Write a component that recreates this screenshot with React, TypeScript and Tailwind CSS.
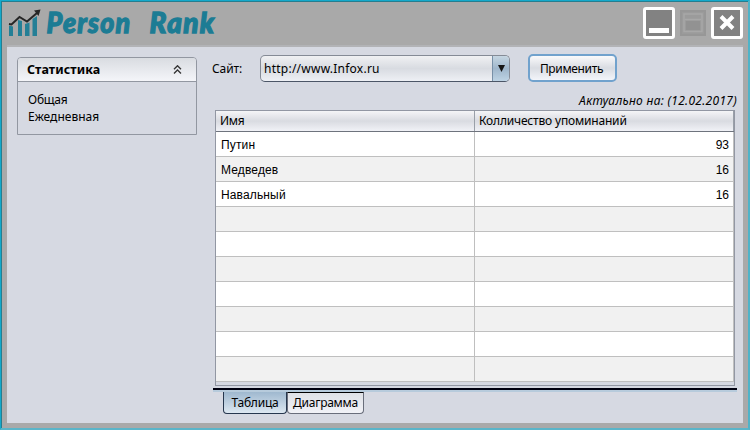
import React from "react";

const rows: [string, string][] = [
  ["Путин", "93"],
  ["Медведев", "16"],
  ["Навальный", "16"],
  ["", ""],
  ["", ""],
  ["", ""],
  ["", ""],
  ["", ""],
  ["", ""],
  ["", ""],
];

function Logo() {
  return (
    <svg width="222" height="45" viewBox="0 0 222 45" className="block">
      <path d="M9 25.500l4 1V36H9zM18 20l4 1v15h-4zM25 24l4.500-1.500V36H25zM32.500 19l4.500-3v20h-4.500z" fill="#247f96" />
      <path d="M9 24l2.500.5 8-7.500 7.500 4.500 10-8.500" fill="none" stroke="#262626" strokeWidth="2" />
      <path d="M34 10.500l6.500-1-2 6.500z" fill="#262626" />
      <g
        fill="#1c7c94"
        stroke="#1c7c94"
        strokeWidth="1.300"
        fontFamily="Lato, sans-serif"
        fontWeight="900"
        fontStyle="italic"
        fontSize="28.500"
      >
        <text transform="translate(46.500 32.500) scale(.94 1)" textLength="89" lengthAdjust="spacing">Person</text>
        <text transform="translate(149.500 32.500) scale(.98 1)" textLength="66" lengthAdjust="spacing">Rank</text>
      </g>
    </svg>
  );
}

function WindowButtons() {
  return (
    <svg width="104" height="45" viewBox="640 0 104 45" className="block">
      <rect x="644.500" y="8.500" width="29" height="29" rx="1.500" fill="#828282" stroke="#fff" strokeWidth="3" />
      <rect x="649" y="28" width="20" height="5" fill="#fff" />
      <rect x="681" y="11" width="24" height="24" fill="#9b9b9b" stroke="#979797" strokeWidth="2" />
      <path d="M684 14h18v17.500h-18zM685 19.500h16" fill="none" stroke="#a8a8a8" strokeWidth="1.500" />
      <rect x="686" y="21" width="14" height="9" fill="#929292" />
      <rect x="712.500" y="8.500" width="29" height="29" rx="1.500" fill="#828282" stroke="#fff" strokeWidth="3" />
      <path d="M721 16.500l12 12M733 16.500l-12 12" stroke="#fff" strokeWidth="4" />
    </svg>
  );
}

function Sidebar() {
  return (
    <aside className="ml-[10px] mt-[10px] h-[78px] w-[180px] shrink-0 rounded-t-[4px] border border-[#9297a1]">
      <div className="flex h-[24px] items-center justify-between rounded-t-[3px] border-b border-[#9297a1] bg-linear-to-b from-[#d9dce1] to-[#f4f5f9] pl-[9px] pr-[14px]">
        <b className="pt-px text-[12.500px] leading-none tracking-[0.050px]">Статистика</b>
        <svg width="9" height="10" viewBox="0 0 9 10" fill="none" stroke="#333" strokeWidth="1.300">
          <path d="M1 4.200l3.500-3.500L8 4.200M1 8.500l3.500-3.500L8 8.500" />
        </svg>
      </div>
      <ul className="pl-[10px] pt-[9px] leading-[17px]">
        <li className="tracking-[-0.250px]">Общая</li>
        <li className="tracking-[0.020px]">Ежедневная</li>
      </ul>
    </aside>
  );
}

function Toolbar() {
  return (
    <div className="flex h-[28px] items-center">
      <span className="w-[48px] pt-px tracking-[-0.100px]">Сайт:</span>
      <div className="flex h-[27px] w-[250px] overflow-hidden rounded-[5px] border border-[#858b96] border-b-[#4c5667] bg-linear-to-b from-[#f0f1f3] via-[#d8dbe1] to-[#eef0f5]">
        <span className="flex flex-1 items-center pl-[3px] pt-px tracking-[0.240px]">http://www.Infox.ru</span>
        <span className="flex w-[17px] items-center justify-center border-l border-[#7890a7] bg-linear-to-b from-[#c6d6e2] via-[#9fb6cb] to-[#bed3e4]">
          <svg width="7" height="7" viewBox="0 0 7 7">
            <path d="M0 0h7L3.500 7z" fill="#151515" />
          </svg>
        </span>
      </div>
      <button className="ml-[18px] h-[28px] w-[89px] rounded-[5px] border-2 border-[#71a2cd] bg-linear-to-b from-[#fafafb] via-[#d9dce2] to-[#f3f5fa] pr-[2px] pt-px tracking-[-0.350px]">
        Применить
      </button>
    </div>
  );
}

function Table() {
  return (
    <div className="ml-[3px] h-[276px] w-[520px] border border-[#9297a3] bg-[#d6d9e2]">
      <div className="flex h-[21px] border-b border-[#6e737d] bg-linear-to-b from-[#f5f5f7] via-[#d9dbe1] to-[#f1f2f7] leading-[20px]">
        <div className="w-[259px] border-r border-[#999fa8] pl-[4px] tracking-[-0.300px]">Имя</div>
        <div className="flex-1 border-r border-[#999fa8] pl-[4px] tracking-[-0.180px]">Колличество упоминаний</div>
      </div>
      {rows.map(([name, count], i) => (
        <div
          key={i}
          className="flex h-[25px] border-b border-[#bfbfbf] font-['Liberation_Sans',Arial,sans-serif] text-[12px] leading-[26px] even:bg-white odd:bg-[#f1f1f1]"
        >
          <div className="w-[259px] border-r border-[#bfbfbf] pl-[5px] tracking-[0.140px]">{name}</div>
          <div className="flex-1 border-r border-[#bfbfbf] pr-[4px] text-right">{count}</div>
        </div>
      ))}
    </div>
  );
}

function Tabs() {
  return (
    <div className="mt-[2px] w-[525px]">
      <div className="ml-px h-[4px] border-t-2 border-[#00000f] bg-[#b7cbdc]" />
      <div className="flex pl-[11px] leading-[20px]">
        <div className="h-[22px] w-[64px] rounded-b-[4px] border border-t-0 border-[#26374e] bg-linear-to-b from-[#9fb8cf] to-[#dde8f1] pt-px text-center tracking-[-0.200px]">
          Таблица
        </div>
        <div className="h-[22px] w-[77px] rounded-b-[4px] border border-[#696e7b] border-t-black bg-linear-to-b from-[#dfe1e6] to-[#f1f2f7] text-center tracking-[-0.250px]">
          Диаграмма
        </div>
      </div>
    </div>
  );
}

export default function App() {
  return (
    <div className="h-[430px] w-[750px] overflow-hidden border border-b-2 border-r-2 border-b-[#5ab5c9] border-l-[#14a9cb] border-r-[#4fb3c8] border-t-[#14a9cb] bg-[#a9a9a9] font-['Noto_Sans','Open_Sans',sans-serif] text-[12px] whitespace-nowrap text-black">
      <div className="h-full border-l border-t border-[#257e90] pl-[5px] pr-[5px]">
        <header className="-ml-[7px] -mt-[2px] flex h-[45px] w-[744px] justify-between">
          <Logo />
          <WindowButtons />
        </header>
        <main className="flex h-[378px] w-[736px] border-t-2 border-[#b2b3b6] bg-[#d6d9e2]">
          <Sidebar />
          <section className="ml-[15px] w-[526px] pt-[7px]">
            <Toolbar />
            <div className="mr-px mt-[10px] h-[18px] text-right italic leading-[18px] tracking-[0.290px]">
              Актуально на: (12.02.2017)
            </div>
            <Table />
            <Tabs />
          </section>
        </main>
      </div>
    </div>
  );
}
